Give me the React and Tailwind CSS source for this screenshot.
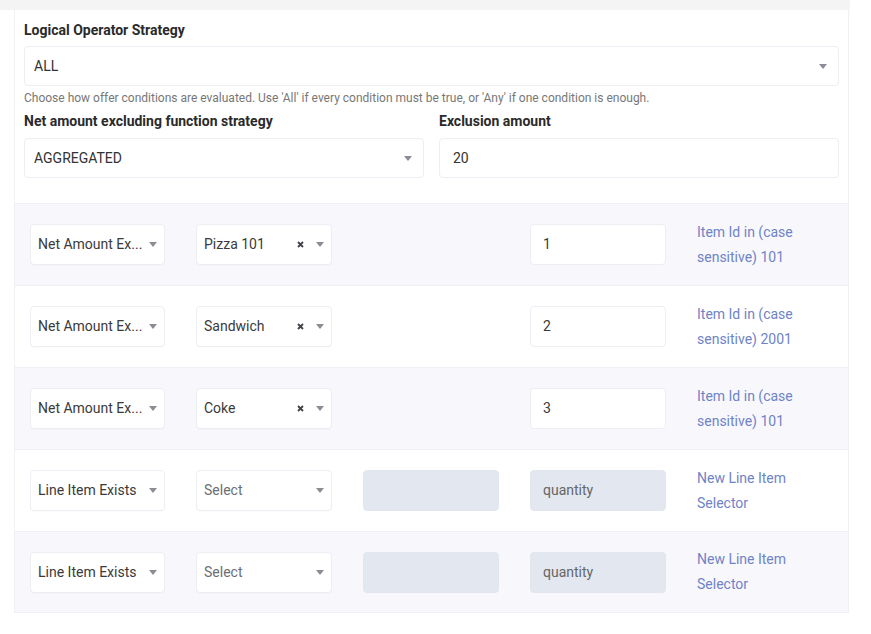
import React from 'react';

function Caret() {
  return (
    <svg width="8" height="5" viewBox="0 0 8 5" className="shrink-0">
      <path d="M0 0 L8 0 L4 5 Z" fill="#8a8d93" />
    </svg>
  );
}

function Cross() {
  return (
    <svg width="7" height="7" viewBox="0 0 7 7" className="shrink-0">
      <path d="M1 1 L6 6 M6 1 L1 6" stroke="#3f4247" strokeWidth="1.8" />
    </svg>
  );
}

function SelectBox({ value, placeholder, clearable, className = '' }) {
  return (
    <div
      className={`flex h-[41px] items-center rounded-[4px] border border-[#eceef3] bg-white pl-[7px] pr-[7px] shadow-[0_1px_1px_rgba(0,0,0,0.02)] ${className}`}
    >
      <span className={`flex-1 truncate ${placeholder ? 'text-[#6b6e73]' : 'text-[#3a3a3a]'}`}>
        {value || placeholder}
      </span>
      {clearable && (
        <span className="mr-[6px] flex items-center">
          <Cross />
        </span>
      )}
      <span className="ml-[6px] flex items-center">
        <Caret />
      </span>
    </div>
  );
}

function InputBox({ value, placeholder, disabled, className = '' }) {
  return (
    <div
      className={`flex h-[41px] items-center rounded-[4px] border px-[12px] ${
        disabled ? 'border-[#e2e6ee] bg-[#e3e7ef] text-[#666]' : 'border-[#eceef3] bg-white text-[#3a3a3a]'
      } ${className}`}
    >
      {value || placeholder}
    </div>
  );
}

const rows = [
  { type: 'Net Amount Ex...', item: 'Pizza 101', qty: '1', link: ['Item Id in (case', 'sensitive) 101'] },
  { type: 'Net Amount Ex...', item: 'Sandwich', qty: '2', link: ['Item Id in (case', 'sensitive) 2001'] },
  { type: 'Net Amount Ex...', item: 'Coke', qty: '3', link: ['Item Id in (case', 'sensitive) 101'] },
  { type: 'Line Item Exists', select: true, qty: 'quantity', link: ['New Line Item', 'Selector'] },
  { type: 'Line Item Exists', select: true, qty: 'quantity', link: ['New Line Item', 'Selector'] },
];

export default function App() {
  return (
    <div className="h-[634px] w-[871px] overflow-hidden bg-white text-[14px] text-[#333] [font-family:Roboto,'Liberation_Sans',sans-serif]">
      <div className="h-[10px] w-[850px] bg-[#f4f4f5]" />
      <div className="ml-[14px] w-[835px] border-x border-[#f0f0f2]">
        {/* strategy section */}
        <div className="px-[9px] pb-[25px] pt-[10px]">
          <div className="mb-[6px] text-[14px] font-bold leading-5 text-[#2a2a2a]">Logical Operator Strategy</div>
          <div className="flex h-[40px] items-center rounded-[4px] border border-[#eceef3] pl-[9px] pr-[11px]">
            <span className="flex-1">ALL</span>
            <Caret />
          </div>
          <div className="mt-[4px] text-[12px] leading-4 text-[#777]">
            Choose how offer conditions are evaluated. Use 'All' if every condition must be true, or 'Any' if one condition is enough.
          </div>
          <div className="mt-[5px] grid grid-cols-[400px_400px] gap-x-[15px]">
            <div>
              <div className="mb-[7px] text-[14px] font-bold leading-5 text-[#2a2a2a]">Net amount excluding function strategy</div>
              <div className="flex h-[40px] items-center rounded-[4px] border border-[#eceef3] pl-[9px] pr-[11px]">
                <span className="flex-1">AGGREGATED</span>
                <Caret />
              </div>
            </div>
            <div>
              <div className="mb-[7px] text-[14px] font-bold leading-5 text-[#2a2a2a]">Exclusion amount</div>
              <div className="flex h-[40px] items-center rounded-[4px] border border-[#eceef3] pl-[13px]">20</div>
            </div>
          </div>
        </div>

        {/* condition rows */}
        {rows.map((r, i) => (
          <div
            key={i}
            className={`flex h-[82px] items-center gap-[31px] border-t border-[#eef0f5] pl-[15px] ${
              i % 2 === 0 ? 'bg-[#f8f8fc]' : 'bg-white'
            } ${i === rows.length - 1 ? 'border-b' : ''}`}
          >
            <SelectBox value={r.type} className="w-[135px]" />
            {r.select ? (
              <SelectBox placeholder="Select" className="w-[136px]" />
            ) : (
              <SelectBox value={r.item} clearable className="w-[136px]" />
            )}
            {r.select ? (
              <InputBox disabled className="w-[136px]" />
            ) : (
              <div className="w-[136px]" />
            )}
            <InputBox
              value={r.select ? null : r.qty}
              placeholder={r.select ? r.qty : null}
              disabled={r.select}
              className="w-[136px]"
            />
            <div className="text-[14px] leading-[25px] text-[#6f83c6]">
              <div>{r.link[0]}</div>
              <div>{r.link[1]}</div>
            </div>
          </div>
        ))}
      </div>
    </div>
  );
}
